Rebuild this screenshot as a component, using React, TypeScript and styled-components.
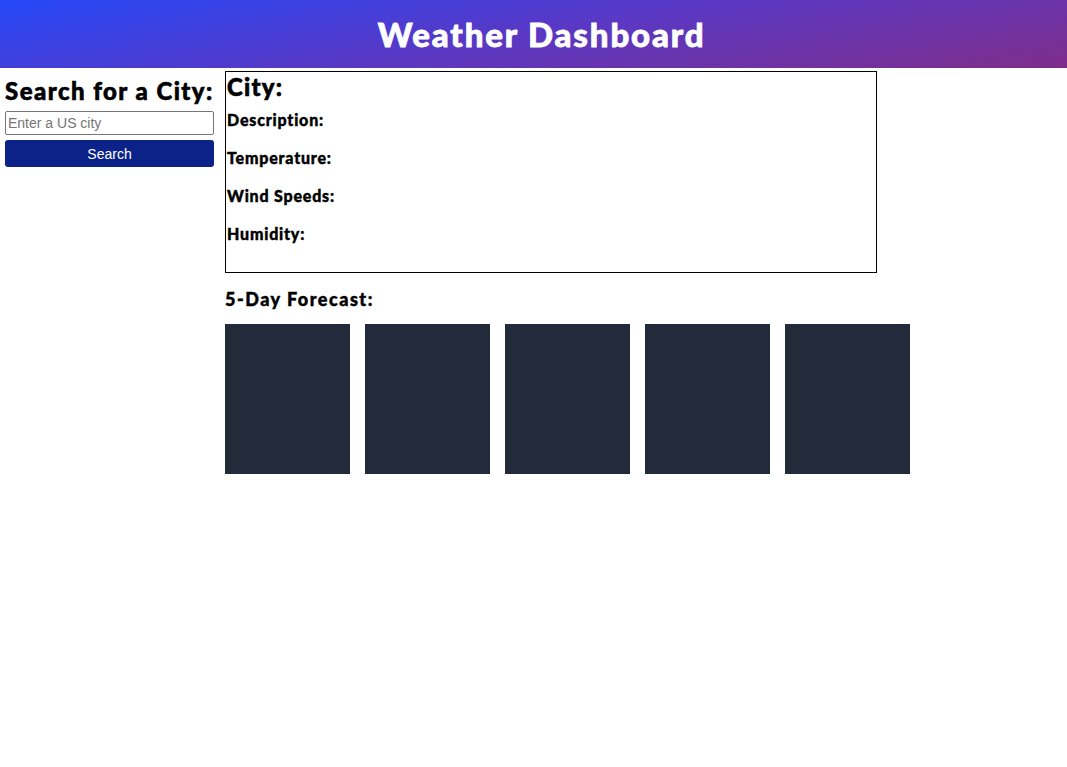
import React from "react";
import styled, { createGlobalStyle } from "styled-components";

const Global = createGlobalStyle`
  html, body { margin: 0; padding: 0; background: #fff; }
  body { font-family: "Lato", "Open Sans", sans-serif; color: #000; }
`;

const Header = styled.header`
  height: 68px;
  display: flex;
  align-items: center;
  justify-content: center;
  background: linear-gradient(170deg, #2447f7 0%, #5a38c4 50%, #7e2d8a 100%);
`;

const Title = styled.h1`
  margin: 0 0 0 16px;
  color: #fff;
  font-size: 33px;
  font-weight: 900;
  letter-spacing: 1.85px;
  -webkit-text-stroke: 0.8px #fff;
`;

const Page = styled.div`
  display: flex;
  align-items: flex-start;
  padding: 3px 0 0 5px;
  gap: 11px;
`;

const Sidebar = styled.aside`
  width: 209px;
  display: flex;
  flex-direction: column;
  padding-top: 5px;
`;

const SideHeading = styled.h2`
  margin: 0 0 5px;
  font-size: 24px;
  font-weight: 900;
  line-height: 30px;
  letter-spacing: 1.45px;
  -webkit-text-stroke: 0.6px #000;
  white-space: nowrap;
`;

const CityInput = styled.input`
  box-sizing: border-box;
  width: 100%;
  height: 24px;
  border: 1px solid #767676;
  border-radius: 2px;
  padding: 1px 2px;
  font-family: "Liberation Sans", Arial, sans-serif;
  font-size: 14px;
  &::placeholder { color: #757575; }
`;

const SearchButton = styled.button`
  margin-top: 5px;
  height: 27px;
  width: 100%;
  border: none;
  border-radius: 3px;
  background: #0b2289;
  color: #fff;
  font-family: "Liberation Sans", Arial, sans-serif;
  font-size: 14px;
`;

const Main = styled.main`
  display: flex;
  flex-direction: column;
`;

const CurrentBox = styled.section`
  box-sizing: border-box;
  width: 652px;
  height: 202px;
  border: 1px solid #000;
  padding: 0 1px;
`;

const CityHeading = styled.h2`
  margin: 1px 0 8px;
  font-size: 24px;
  font-weight: 900;
  line-height: 28px;
  letter-spacing: 1.2px;
  -webkit-text-stroke: 0.6px #000;
`;

const Stat = styled.p`
  margin: 0 0 17px;
  font-size: 16px;
  font-weight: 900;
  line-height: 21px;
  letter-spacing: 0.8px;
  -webkit-text-stroke: 0.4px #000;
`;

const ForecastHeading = styled.h3`
  margin: 15px 0 14px;
  font-size: 18px;
  font-weight: 900;
  line-height: 22px;
  letter-spacing: 1.5px;
  -webkit-text-stroke: 0.45px #000;
`;

const Cards = styled.div`
  display: flex;
  gap: 15px;
`;

const Card = styled.div`
  width: 125px;
  height: 150px;
  background: #232b3b;
`;

export default function App() {
  return (
    <>
      <Global />
      <Header>
        <Title>Weather Dashboard</Title>
      </Header>
      <Page>
        <Sidebar>
          <SideHeading>Search for a City:</SideHeading>
          <CityInput placeholder="Enter a US city" />
          <SearchButton>Search</SearchButton>
        </Sidebar>
        <Main>
          <CurrentBox>
            <CityHeading>City:</CityHeading>
            <Stat>Description:</Stat>
            <Stat>Temperature:</Stat>
            <Stat>Wind Speeds:</Stat>
            <Stat>Humidity:</Stat>
          </CurrentBox>
          <ForecastHeading>5-Day Forecast:</ForecastHeading>
          <Cards>
            {[0, 1, 2, 3, 4].map((i) => (
              <Card key={i} />
            ))}
          </Cards>
        </Main>
      </Page>
    </>
  );
}
